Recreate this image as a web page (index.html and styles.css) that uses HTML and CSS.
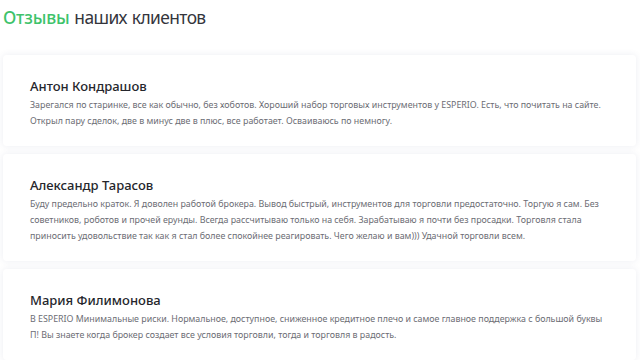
FILE: index.html
```html
<!DOCTYPE html>
<html lang="ru">
<head>
<meta charset="utf-8">
<title>Отзывы</title>
<link rel="stylesheet" href="styles.css">
</head>
<body>
<section class="reviews">
  <h2 class="title"><span class="accent">Отзывы</span> наших клиентов</h2>
  <div class="list">
    <article class="card">
      <h3 class="name">Антон Кондрашов</h3>
      <p class="text">Зарегался по старинке, все как обычно, без хоботов. Хороший набор торговых инструментов у ESPERIO. Есть, что почитать на сайте. Открыл пару сделок, две в минус две в плюс, все работает. Осваиваюсь по немногу.</p>
    </article>
    <article class="card">
      <h3 class="name">Александр Тарасов</h3>
      <p class="text">Буду предельно краток. Я доволен работой брокера. Вывод быстрый, инструментов для торговли предостаточно. Торгую я сам. Без советников, роботов и прочей ерунды. Всегда рассчитываю только на себя. Зарабатываю я почти без просадки. Торговля стала приносить удовольствие так как я стал более спокойнее реагировать. Чего желаю и вам))) Удачной торговли всем.</p>
    </article>
    <article class="card">
      <h3 class="name">Мария Филимонова</h3>
      <p class="text">В ESPERIO Минимальные риски. Нормальное, доступное, сниженное кредитное плечо и самое главное поддержка с большой буквы П! Вы знаете когда брокер создает все условия торговли, тогда и торговля в радость.</p>
    </article>
  </div>
</section>
</body>
</html>
```

FILE: styles.css
```css
* { box-sizing: border-box; }
html, body { margin: 0; padding: 0; background: #fff; }
body {
  font-family: "Noto Sans", "Open Sans", sans-serif;
  color: #2b2c33;
}
.reviews {
  padding: 3px 4px 0 3px;
}
.title {
  margin: 0;
  font-size: 17.4px;
  line-height: 28px;
  font-weight: 400;
  letter-spacing: -0.6px;
  word-spacing: 1px;
  color: #34353c;
}
.accent {
  color: #3ec36b;
  font-weight: 500;
  letter-spacing: -0.2px;
}
.list {
  margin-top: 24px;
  display: flex;
  flex-direction: column;
  gap: 8px;
}
.card {
  background: #fff;
  border-radius: 4px;
  box-shadow: 0 0 7px rgba(40, 50, 110, 0.09);
  padding: 21px 27px 17px 27px;
}
.name {
  margin: 0;
  font-size: 13px;
  line-height: 20px;
  font-weight: 500;
  color: #25262c;
}
.text {
  margin: 1px 0 0 0;
  font-size: 8.85px;
  line-height: 16px;
  color: #6c6d74;
}
```
